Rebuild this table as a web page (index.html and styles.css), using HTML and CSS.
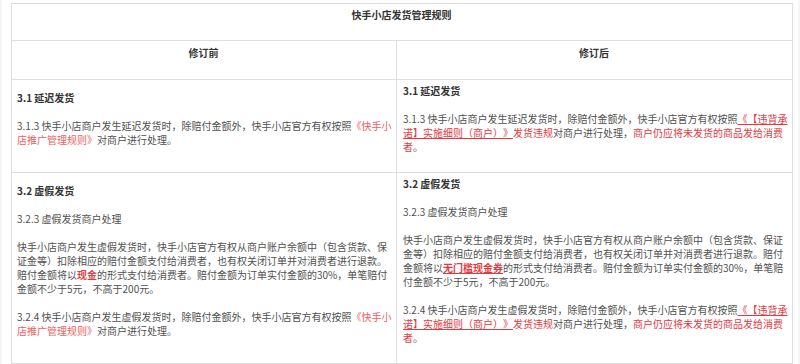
FILE: index.html
```html
<!DOCTYPE html>
<html lang="zh-CN">
<head>
<meta charset="utf-8">
<title>快手小店发货管理规则</title>
<link rel="stylesheet" href="styles.css">
</head>
<body>
<div class="frame">
  <table class="rules">
    <colgroup><col class="c-before"><col class="c-after"></colgroup>
    <tr>
      <th colspan="2" class="title"><p>快手小店发货管理规则</p></th>
    </tr>
    <tr>
      <th class="col-head"><p>修订前</p></th>
      <th class="col-head"><p>修订后</p></th>
    </tr>
    <tr>
      <td class="cell">
        <p class="sec">3.1 延迟发货</p>
        <p>3.1.3 快手小店商户发生延迟发货时，除赔付金额外，快手小店官方有权按照<span class="ref-old">《快手小<br>店推广管理规则》</span>对商户进行处理。</p>
      </td>
      <td class="cell">
        <p class="sec">3.1 延迟发货</p>
        <p>3.1.3 快手小店商户发生延迟发货时，除赔付金额外，快手小店官方有权按照<span class="ref-new"><u>《【违背承<br>诺】实施细则（商户）》</u>发货违规</span>对商户进行处理，<span class="ref-new">商户仍应将未发货的商品发给消费<br>者</span>。</p>
      </td>
    </tr>
    <tr>
      <td class="cell">
        <p class="sec">3.2 虚假发货</p>
        <p>3.2.3 虚假发货商户处理</p>
        <p>快手小店商户发生虚假发货时，快手小店官方有权从商户账户余额中（包含货款、保<br>证金等）扣除相应的赔付金额支付给消费者，也有权关闭订单并对消费者进行退款。<br>赔付金额将以<b class="hl">现金</b>的形式支付给消费者。赔付金额为订单实付金额的30%，单笔赔付<br>金额不少于5元，不高于200元。</p>
        <p>3.2.4 快手小店商户发生虚假发货时，除赔付金额外，快手小店官方有权按照<span class="ref-old">《快手小<br>店推广管理规则》</span>对商户进行处理。</p>
      </td>
      <td class="cell">
        <p class="sec">3.2 虚假发货</p>
        <p>3.2.3 虚假发货商户处理</p>
        <p>快手小店商户发生虚假发货时，快手小店官方有权从商户账户余额中（包含货款、保证<br>金等）扣除相应的赔付金额支付给消费者，也有权关闭订单并对消费者进行退款。赔付<br>金额将以<b class="hl"><u>无门槛现金券</u></b>的形式支付给消费者。赔付金额为订单实付金额的30%，单笔赔<br>付金额不少于5元，不高于200元。</p>
        <p>3.2.4 快手小店商户发生虚假发货时，除赔付金额外，快手小店官方有权按照<span class="ref-new"><u>《【违背承<br>诺】实施细则（商户）》</u>发货违规</span>对商户进行处理，<span class="ref-new">商户仍应将未发货的商品发给消费<br>者</span>。</p>
      </td>
    </tr>
  </table>
</div>
</body>
</html>
```
FILE: styles.css
```css
html, body {
  margin: 0;
  padding: 0;
  background: #ffffff;
}

body {
  font-family: "Noto Sans CJK SC", "Microsoft YaHei", sans-serif;
  font-size: 10px;
  line-height: 14px;
  color: #505050;
  text-spacing-trim: space-all;
}

.frame {
  width: 800px;
  height: 364px;
  box-sizing: border-box;
  border-left: 2px solid #f5f5f5;
  border-right: 2px solid #f5f5f5;
  padding: 3px 0 0 9px;
  overflow: hidden;
}

.rules {
  border-collapse: collapse;
  table-layout: fixed;
  width: 781px;
}

.c-before { width: 385px; }
.c-after { width: 396px; }

.rules th,
.rules td {
  border: 1px solid #dedede;
  padding: 4px 6px 4px 5px;
}

.rules p {
  margin: 0 0 14px;
  white-space: nowrap;
}

.title,
.col-head {
  font-weight: bold;
  color: #333333;
  text-align: center;
  vertical-align: top;
}

.rules th.col-head {
  padding-top: 5px;
  padding-bottom: 5px;
}

.cell {
  vertical-align: middle;
  text-align: left;
}

.rules td.cell + td.cell {
  padding-left: 6px;
}

.sec {
  font-weight: bold;
  color: #333333;
}

.ref-old {
  color: #ec6060;
}

.ref-new {
  color: #e2393f;
}

.hl {
  color: #e2393f;
  font-weight: bold;
}

u {
  text-decoration: underline;
  text-underline-offset: 1px;
}
```
